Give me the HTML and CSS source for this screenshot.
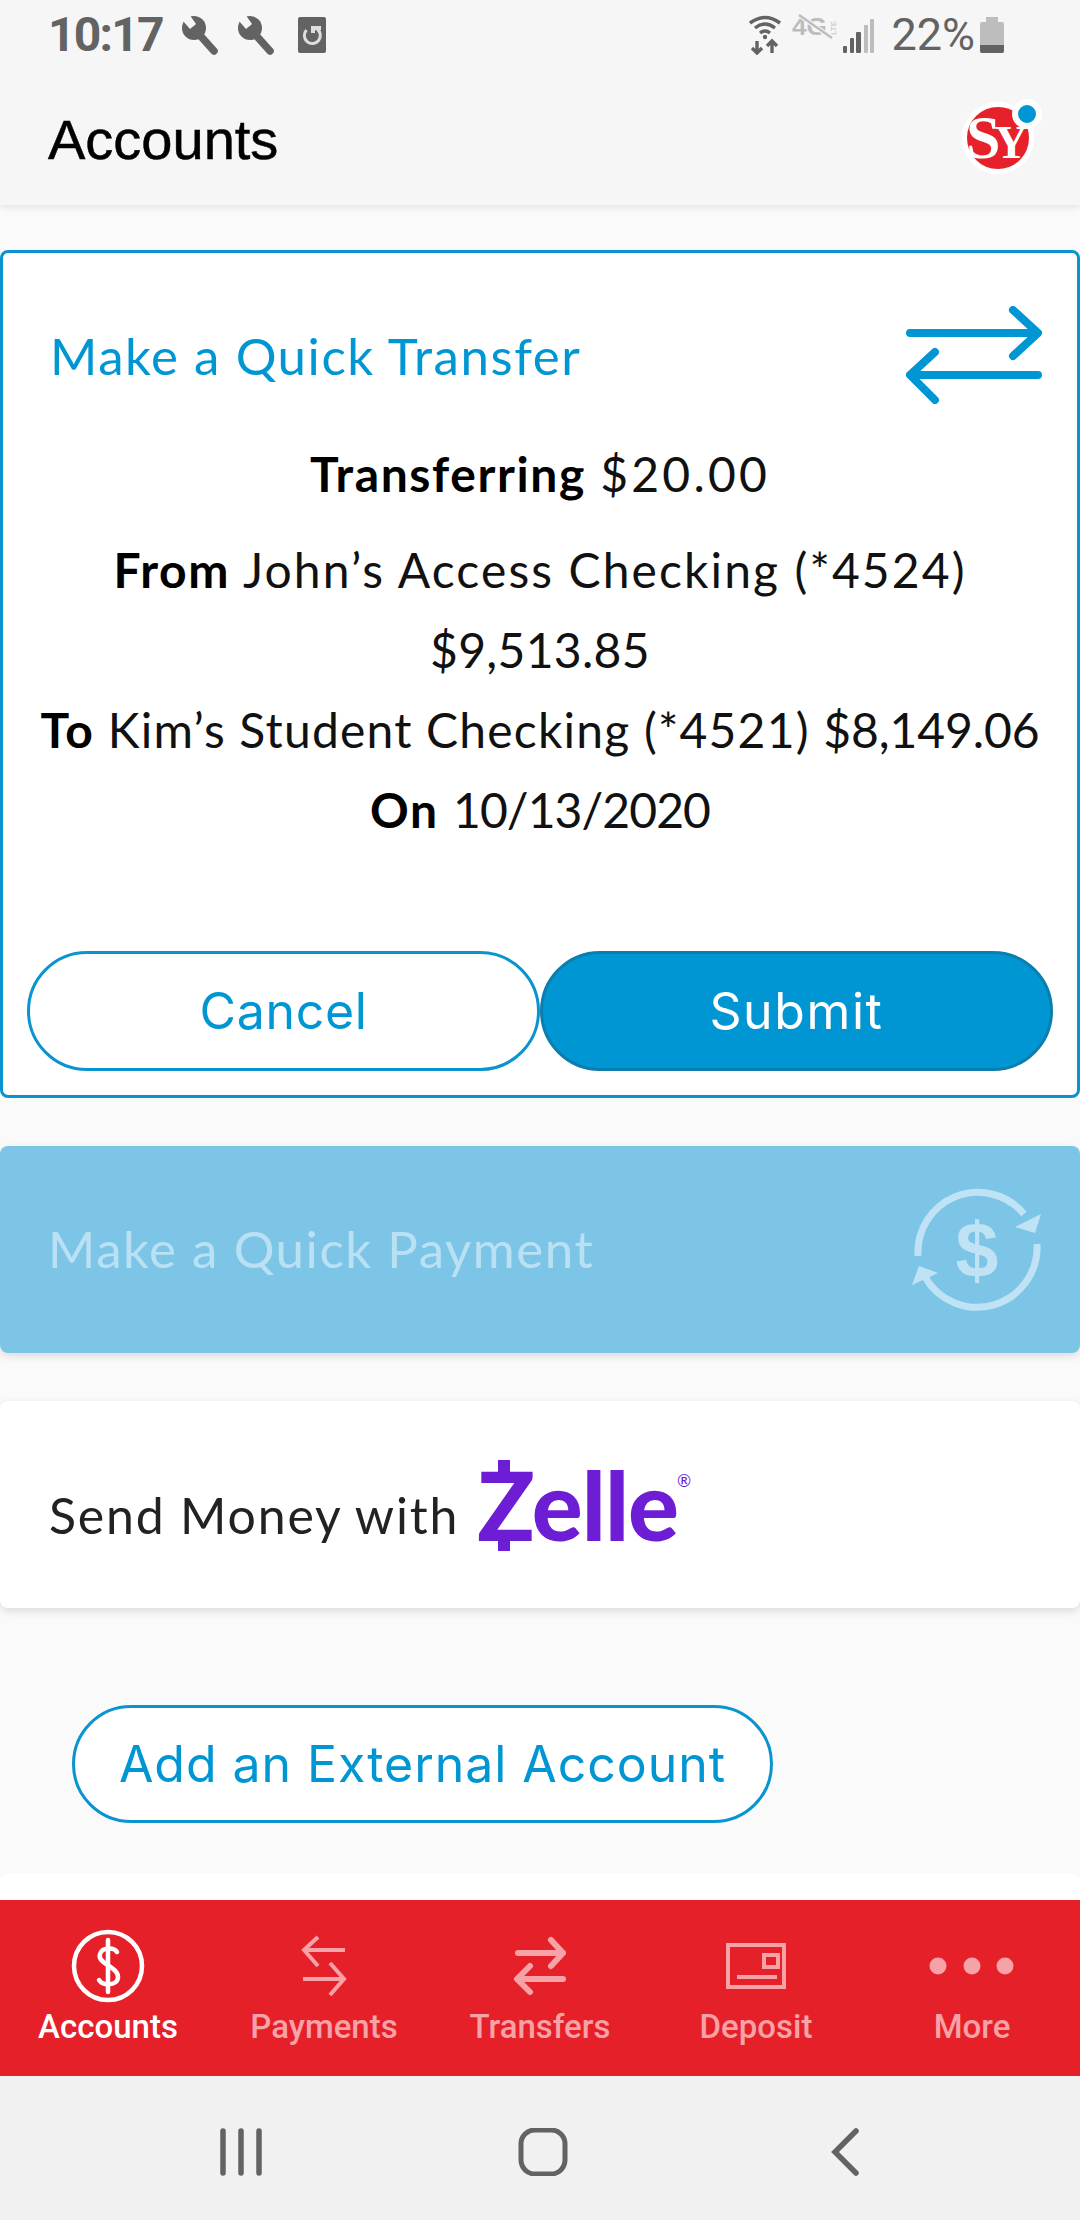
FILE: index.html
```html
<!DOCTYPE html>
<html lang="en">
<head>
  <meta charset="UTF-8">
  <meta name="viewport" content="width=device-width, initial-scale=1.0">
  <title>Accounts</title>
  <link rel="stylesheet" href="styles.css">
</head>
<body>
  <header class="top">
    <div class="status">
      <div class="status-left">
        <span class="time">10:17</span>
        <svg class="wrench" viewBox="0 0 38 40"><circle cx="13" cy="12" r="12" fill="#636363"/><path d="M2 5 L9 13 L15 8 L8 -2 L2 -2 Z" fill="#f6f6f6"/><path d="M16 16 L33 35" stroke="#636363" stroke-width="7.5" stroke-linecap="round"/></svg>
        <svg class="wrench" viewBox="0 0 38 40"><circle cx="13" cy="12" r="12" fill="#636363"/><path d="M2 5 L9 13 L15 8 L8 -2 L2 -2 Z" fill="#f6f6f6"/><path d="M16 16 L33 35" stroke="#636363" stroke-width="7.5" stroke-linecap="round"/></svg>
        <svg class="rotate" viewBox="0 0 28 36"><rect width="28" height="36" rx="2" fill="#636363"/><path d="M8.5 13 A8 8 0 1 0 19 12" fill="none" stroke="#dedede" stroke-width="3"/><path d="M13 9 H23 V13 H17 V16 H13 Z" fill="#dedede"/></svg>
      </div>
      <div class="status-right">
        <svg class="wifi" viewBox="0 0 32 40"><g fill="none" stroke="#636363" stroke-width="3.5"><path d="M1 8 Q16 -3 31 8"/><path d="M6 13 Q16 5 26 13"/><path d="M11 18 Q16 14 21 18"/></g><circle cx="16" cy="22" r="2.2" fill="#636363"/><g fill="none" stroke="#636363" stroke-width="3.4"><path d="M8 26 V38 M3 33 L8 38 L13 33"/><path d="M23 38 V26 M18 31 L23 26 L28 31"/></g></svg>
        <svg class="lte" viewBox="0 0 46 26"><text x="0" y="20" textLength="35" lengthAdjust="spacingAndGlyphs" class="lte-big">4G</text><text x="0" y="0" transform="translate(44 20) rotate(-90)" class="lte-small">LTE</text><path d="M6 -1 L41 24" stroke="#f6f6f6" stroke-width="5"/><path d="M7 0 L40 23" stroke="#bdbdbd" stroke-width="2.5"/></svg>
        <svg class="signal" viewBox="0 0 32 34"><g fill="#636363"><rect x="0" y="27" width="4" height="7" rx="1"/><rect x="7" y="19" width="4" height="15" rx="1"/><rect x="13" y="13" width="5" height="21" rx="1"/></g><g fill="#bdbdbd"><rect x="21" y="6" width="4" height="28" rx="1"/><rect x="27" y="0" width="4" height="34" rx="1"/></g></svg>
        <span class="battery-text">22%</span>
        <svg class="battery" viewBox="0 0 24 36"><path d="M6 0 H18 V5 H6 Z" fill="#bdbdbd"/><rect y="5" width="24" height="31" rx="2" fill="#bdbdbd"/><path d="M0 28 H24 V34 a2 2 0 0 1 -2 2 H2 a2 2 0 0 1 -2 -2 Z" fill="#636363"/></svg>
      </div>
    </div>
    <div class="title-bar">
      <h1>Accounts</h1>
      <div class="avatar">
        <span class="avatar-text">S<span class="avatar-y">Y</span></span>
        <span class="avatar-dot"></span>
      </div>
    </div>
  </header>

  <main class="content">
    <section class="card transfer">
      <div class="card-head">
        <h2>Make a Quick Transfer</h2>
        <svg class="transfer-icon" viewBox="0 0 136 98"><g fill="none" stroke="#0096d3" stroke-width="8" stroke-linecap="round" stroke-linejoin="round"><path d="M4 27 H131 M107 4 L132 27 L107 50"/><path d="M132 69 H5 M29 46 L4 69 L29 94"/></g></svg>
      </div>
      <div class="details">
        <p class="amount"><b>Transferring</b> <span class="wide">$20.00</span></p>
        <p><b>From</b> John’s Access Checking (*4524) <span class="tight">$9,513.85</span></p>
        <p class="to-line"><b>To</b> Kim’s Student Checking (*4521) <span class="to-amount">$8,149.06</span></p>
        <p><b>On</b> <span class="date">10/13/2020</span></p>
      </div>
      <div class="actions">
        <button class="pill">Cancel</button>
        <button class="pill pill-solid">Submit</button>
      </div>
    </section>

    <section class="card payment">
      <h2>Make a Quick Payment</h2>
      <svg class="payment-icon" viewBox="0 0 132 132"><g fill="none" stroke="#bfe3f5" stroke-width="7"><path d="M7 71 A60 60 0 0 1 113 29"/><path d="M126 59 A60 60 0 0 1 14 92"/></g><path d="M104 42 L130 29 L124 48 Z" fill="#bfe3f5"/><path d="M1 100 L8 81 L27 88 Z" fill="#bfe3f5"/><text x="66" y="92" class="payment-dollar">$</text></svg>
    </section>

    <section class="card zelle">
      <span class="zelle-text">Send Money with</span>
      <span class="zelle-logo">Zelle<sup>®</sup></span>
    </section>

    <div class="external">
      <button class="pill pill-wide">Add an External Account</button>
    </div>

    <div class="peek"></div>
  </main>

  <nav class="tabs">
    <a class="tab active">
      <svg class="tab-icon" viewBox="0 0 76 76"><circle cx="38" cy="38" r="34" fill="none" stroke="#fff" stroke-width="4.5"/><path d="M38 12 V64" stroke="#fff" stroke-width="4.5" stroke-linecap="round"/><path d="M47 24 C44 19 32 19 30 26 C27 36 48 38 48 49 C48 58 33 58 29 52" fill="none" stroke="#fff" stroke-width="4.5" stroke-linecap="round"/></svg>
      <span>Accounts</span>
    </a>
    <a class="tab">
      <svg class="tab-icon" viewBox="0 0 76 76"><g fill="none" stroke="#f6a2a7" stroke-width="4"><path d="M59 22 H20 M32 9 L18 22 L32 38"/><path d="M17 51 H56 M44 35 L58 51 L44 67"/></g></svg>
      <span>Payments</span>
    </a>
    <a class="tab">
      <svg class="tab-icon" viewBox="0 0 76 76"><g fill="none" stroke="#f6a2a7" stroke-width="6" stroke-linecap="round" stroke-linejoin="round"><path d="M16 25 H61 M49 12 L61 25 L49 38"/><path d="M61 51 H16 M28 38 L15 51 L28 64"/></g></svg>
      <span>Transfers</span>
    </a>
    <a class="tab">
      <svg class="tab-icon" viewBox="0 0 76 76"><g fill="none" stroke="#f6a2a7" stroke-width="4"><rect x="10" y="17" width="56" height="42"/><rect x="46" y="27" width="14" height="12"/><path d="M19 49 H59"/></g></svg>
      <span>Deposit</span>
    </a>
    <a class="tab">
      <svg class="tab-icon" viewBox="0 0 76 76"><g fill="#f6a2a7"><circle cx="4" cy="38" r="8.5"/><circle cx="38" cy="38" r="8.5"/><circle cx="71" cy="38" r="8.5"/></g></svg>
      <span>More</span>
    </a>
  </nav>

  <footer class="softkeys">
    <svg class="softkey" viewBox="0 0 60 48"><g stroke="#636363" stroke-width="5.5" stroke-linecap="round"><path d="M12 3 V45 M30 3 V45 M48 3 V45"/></g></svg>
    <svg class="softkey" viewBox="0 0 60 48"><rect x="8" y="2" width="44" height="44" rx="14" fill="none" stroke="#636363" stroke-width="5"/></svg>
    <svg class="softkey" viewBox="0 0 60 48"><path d="M41 3 L20 24 L41 45" fill="none" stroke="#636363" stroke-width="5.5" stroke-linecap="round"/></svg>
  </footer>
</body>
</html>
```

FILE: styles.css
```css
* {
  box-sizing: border-box;
}
body {
  font-family: Lato, "Open Sans", sans-serif;
  background-color: #fafafa;
  color: #111;
  display: flex;
  flex-direction: column;
  width: 1080px;
  height: 2220px;
  margin: 0;
  overflow: hidden;
}
h1, h2, p {
  margin: 0;
  font-weight: 400;
}
.top {
  height: 205px;
  flex-shrink: 0;
  background-color: #f6f6f6;
  box-shadow: 0 2px 8px rgba(0, 0, 0, 0.1);
  z-index: 1;
}
.status {
  display: flex;
  justify-content: space-between;
  height: 70px;
  padding: 14px 76px 0 48px;
  color: #636363;
}
.status-left, .status-right {
  display: flex;
  align-items: flex-start;
}
.time {
  font-family: Roboto, sans-serif;
  font-size: 48px;
  font-weight: 700;
  line-height: 42px;
  letter-spacing: -1.8px;
  margin-right: 18px;
}
.wrench {
  width: 38px;
  height: 40px;
  margin: 2px 18px 0 0;
}
.rotate {
  width: 28px;
  height: 36px;
  margin: 3px 0 0 5px;
}
.wifi {
  width: 32px;
  height: 40px;
  margin: 1px 11px 0 0;
}
.lte {
  width: 46px;
  height: 26px;
  margin: 1px 5px 0 0;
  overflow: visible;
}
.lte-big {
  font-family: "Liberation Sans", sans-serif;
  font-size: 24px;
  font-weight: 700;
  fill: #bdbdbd;
}
.lte-small {
  font-family: "Liberation Sans", sans-serif;
  font-size: 8px;
  fill: #bdbdbd;
}
.signal {
  width: 32px;
  height: 34px;
  margin: 5px 16px 0 0;
}
.battery-text {
  font-family: Roboto, sans-serif;
  font-size: 45px;
  line-height: 42px;
  margin-right: 5px;
}
.battery {
  width: 24px;
  height: 36px;
  margin-top: 3px;
}
.title-bar {
  display: flex;
  justify-content: space-between;
  align-items: center;
  height: 135px;
  padding: 0 46px 0 48px;
}
h1 {
  font-family: "Liberation Sans", sans-serif;
  font-size: 56px;
  -webkit-text-stroke: 0.5px #000;
  color: #000;
  margin-top: 4px;
}
.avatar {
  position: relative;
  width: 72px;
  height: 72px;
  background-color: #e62129;
  border: 5px solid #fff;
  border-radius: 50%;
  color: #fff;
  margin-top: 1px;
}
.avatar-text {
  font-family: "Liberation Serif", serif;
  font-weight: 700;
  font-size: 62px;
  line-height: 60px;
  display: block;
  margin-left: -1px;
  letter-spacing: -6px;
}
.avatar-y {
  font-size: 46px;
}
.avatar-dot {
  position: absolute;
  top: -8px;
  right: -13px;
  background-color: #0096d3;
  border: 6px solid #fff;
  border-radius: 50%;
  box-sizing: content-box;
  width: 18px;
  height: 18px;
}
.content {
  flex: 1;
  min-height: 0;
  display: flex;
  flex-direction: column;
  padding-top: 45px;
}
.card {
  background-color: #fff;
  border-radius: 8px;
  box-shadow: 0 3px 8px rgba(0, 0, 0, 0.13);
  flex-shrink: 0;
}
.card h2 {
  font-size: 51px;
  letter-spacing: 1.55px;
}
.transfer {
  height: 848px;
  border: 3px solid #0a94cf;
  box-shadow: none;
  padding: 0 24px 24px;
  display: flex;
  flex-direction: column;
}
.card-head {
  display: flex;
  justify-content: space-between;
  align-items: center;
  height: 100px;
  margin: 52px 11px 29px 23px;
  color: #0096d3;
}
.transfer-icon {
  width: 136px;
  height: 98px;
}
.details {
  flex: 1;
  text-align: center;
  font-size: 48px;
  line-height: 80px;
  color: #111;
  letter-spacing: 2.1px;
}
.details b {
  font-weight: 700;
  color: #000;
  letter-spacing: 1.6px;
}
.wide {
  letter-spacing: 3.2px;
}
.tight {
  letter-spacing: 0.3px;
}
.date {
  letter-spacing: -0.9px;
}
.details .to-line {
  letter-spacing: 1.2px;
}
.to-amount {
  letter-spacing: -0.1px;
}
.amount {
  margin-bottom: 16px;
}
.actions {
  display: flex;
}
.pill {
  flex: 1;
  height: 120px;
  font-family: Inter, sans-serif;
  font-size: 50px;
  letter-spacing: 0.7px;
  color: #0096d3;
  background-color: #fff;
  border: 3px solid #0a94cf;
  border-radius: 60px;
  padding: 0;
}
.pill-solid {
  background-color: #0096d3;
  border-color: #0a7eae;
  color: #fff;
  letter-spacing: 1.6px;
}
.pill-wide {
  flex: none;
  width: 701px;
  letter-spacing: 0.95px;
}
.payment {
  height: 207px;
  margin-top: 48px;
  background-color: #7cc5e7;
  color: #b9e0f3;
  display: flex;
  justify-content: space-between;
  align-items: center;
  padding: 0 37px 0 48px;
}
.payment h2 {
  margin-top: -3px;
}
.payment-icon {
  width: 132px;
  height: 132px;
  margin-top: 3px;
}
.payment-dollar {
  font-family: "Liberation Sans", sans-serif;
  font-size: 77px;
  font-weight: 700;
  text-anchor: middle;
  fill: #bfe3f5;
}
.zelle {
  height: 207px;
  margin-top: 48px;
  display: flex;
  align-items: center;
  padding-left: 49px;
}
.zelle-text {
  font-size: 50px;
  letter-spacing: 1.8px;
  color: #222;
  margin: 20px 18px 0 0;
}
.zelle-logo {
  position: relative;
  font-family: Lato, sans-serif;
  font-size: 95px;
  font-weight: 900;
  letter-spacing: -1px;
  color: #6d1ed4;
  line-height: 1;
}
.zelle-logo::before, .zelle-logo::after {
  content: "";
  position: absolute;
  left: 21px;
  width: 12px;
  height: 16px;
  background-color: #6d1ed4;
}
.zelle-logo::before {
  top: 3px;
}
.zelle-logo::after {
  bottom: 1px;
}
.zelle-logo sup {
  font-size: 17px;
  font-weight: 400;
  vertical-align: 54px;
  line-height: 0;
  letter-spacing: 0;
  margin-left: -1px;
}
.external {
  margin-top: 97px;
  padding-left: 72px;
  flex-shrink: 0;
}
.external .pill {
  height: 118px;
}
.peek {
  margin-top: 50px;
  flex: 1;
  background-color: #fff;
  border-radius: 10px 10px 0 0;
}
.tabs {
  display: grid;
  grid-template-columns: repeat(5, 1fr);
  height: 176px;
  flex-shrink: 0;
  background-color: #e62028;
}
.tab {
  display: flex;
  flex-direction: column;
  align-items: center;
  padding-top: 28px;
  font-family: Roboto, sans-serif;
  font-size: 33px;
  font-weight: 500;
  color: #f6a2a7;
}
.tab span {
  line-height: 40px;
  margin-top: 3px;
}
.tab.active {
  color: #fff;
}
.tab-icon {
  width: 76px;
  height: 76px;
  overflow: visible;
}
.softkeys {
  height: 144px;
  flex-shrink: 0;
  background-color: #f1f1f1;
  display: flex;
  justify-content: center;
  align-items: center;
  padding-left: 6px;
  gap: 242px;
}
.softkey {
  width: 60px;
  height: 48px;
  margin-top: 8px;
}
```
